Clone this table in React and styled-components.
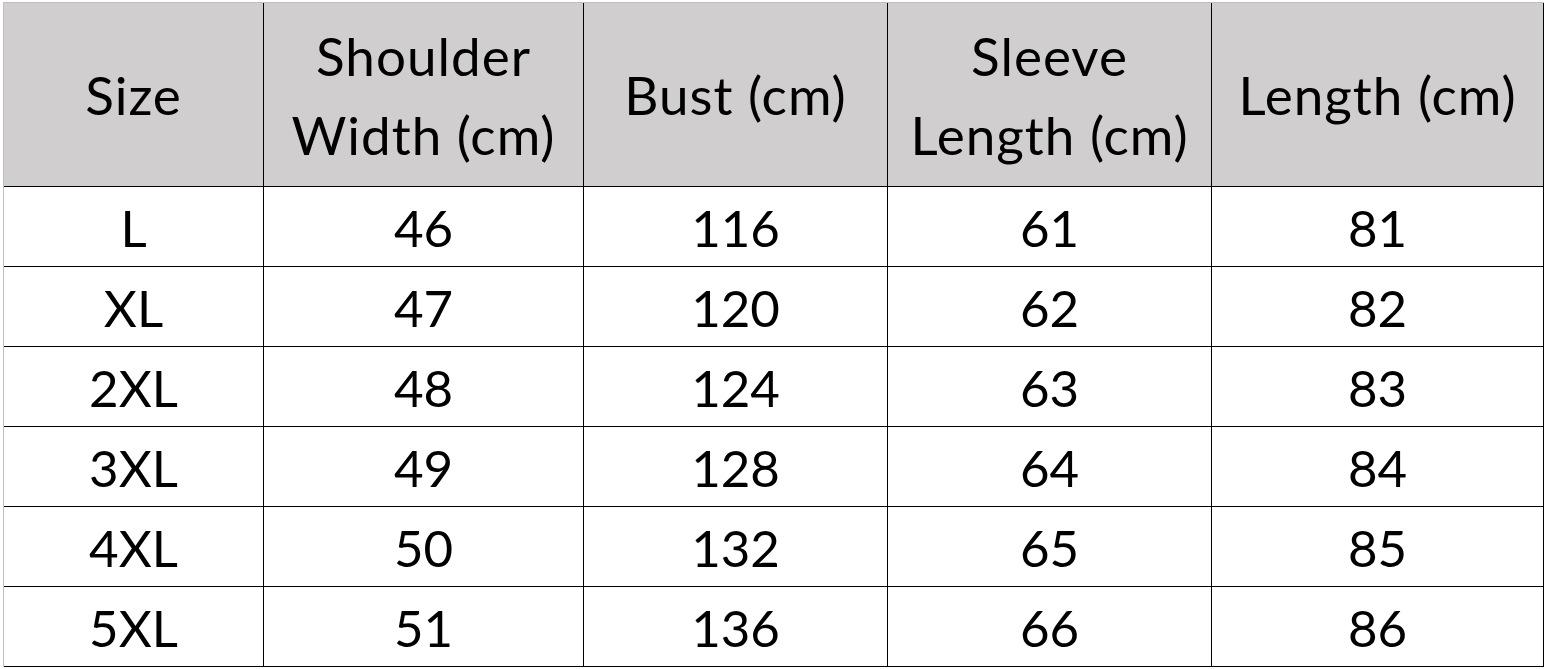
import styled, { createGlobalStyle } from 'styled-components';

const GlobalStyle = createGlobalStyle`
    html, body {
        margin: 0;
        padding: 0;
        background: #fff;
    }
    body {
        font-family: Lato, "Open Sans", sans-serif;
        color: #000;
    }
`

const Page = styled.div`
    padding: 2px 0 0 3px;
`

const SizeGrid = styled.div`
    display: grid;
    grid-template-columns: 260px 320px 304px 324px 332px;
    grid-template-rows: 184px repeat(6, 80px);
    border-top: 1px solid #bfbfbf;
    border-left: 1px solid #bfbfbf;
    width: max-content;
`

const Cell = styled.div`
    display: flex;
    align-items: center;
    justify-content: center;
    text-align: center;
    border-right: 1px solid #000;
    border-bottom: 1px solid #000;
    background: ${props => props.$head ? '#d0cece' : '#fff'};
    font-size: ${props => props.$head ? '53px' : '51px'};
    letter-spacing: ${props => props.$head ? '1px' : '0'};
    line-height: 79px;
    padding-top: ${props => props.$head ? '0' : '2px'};
    box-sizing: border-box;
`

const headers = [
    ['Size'],
    ['Shoulder', 'Width (cm)'],
    ['Bust (cm)'],
    ['Sleeve', 'Length (cm)'],
    ['Length (cm)'],
];

const rows = [
    ['L', 46, 116, 61, 81],
    ['XL', 47, 120, 62, 82],
    ['2XL', 48, 124, 63, 83],
    ['3XL', 49, 128, 64, 84],
    ['4XL', 50, 132, 65, 85],
    ['5XL', 51, 136, 66, 86],
];

export default function App(){
    return(
        <>
        <GlobalStyle />
        <Page>
            <SizeGrid>
                {headers.map((lines, i) => (
                    <Cell $head key={'h' + i}>
                        <div>
                            {lines.map((l, j) => <div key={j}>{l}</div>)}
                        </div>
                    </Cell>
                ))}
                {rows.map((row) => row.map((v, i) => (
                    <Cell key={row[0] + i}>{v}</Cell>
                )))}
            </SizeGrid>
        </Page>
        </>
    )
};
